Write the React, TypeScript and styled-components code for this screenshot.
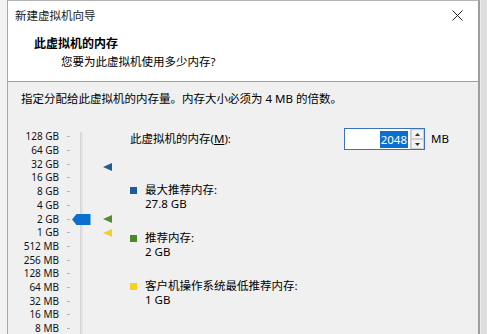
import React from "react";
import styled, { createGlobalStyle } from "styled-components";

const GlobalStyle = createGlobalStyle`
  html, body {
    margin: 0;
    padding: 0;
    background: #e6e6e6;
  }
  body {
    font-family: "Noto Sans", "Noto Sans CJK SC", sans-serif;
    font-size: 11.5px;
    color: #000;
  }
`;

const ROW = 13.71;

const scale = [
  "128 GB", "64 GB", "32 GB", "16 GB", "8 GB", "4 GB", "2 GB", "1 GB",
  "512 MB", "256 MB", "128 MB", "64 MB", "32 MB", "16 MB", "8 MB",
];

// position on the slider, counted in rows from 128 GB (log2 scale)
const rowOf = (gb: number) => 7 - Math.log2(gb);

const Page = styled.div`
  height: 334px;
  overflow: hidden;
  display: flex;
  background: #f2f2f2;
`;

const Window = styled.div`
  margin-left: 7px;
  width: 470px;
  border-left: 1px solid #a9a9a9;
  border-right: 2px solid #9d9d9d;
  border-top: 1px solid #b4b4b4;
  background: #f0f0f0;
  display: flex;
  flex-direction: column;
`;

const Outside = styled.div`
  flex: 1;
  background: #dedede;
  border-left: 1px solid #ececec;
`;

const Head = styled.div`
  background: #fff;
  border-bottom: 1px solid #a0a0a0;
  padding-bottom: 11px;
`;

const TitleBar = styled.div`
  height: 29px;
  display: flex;
  align-items: center;
  justify-content: space-between;
  padding: 0 15px 0 7px;
  line-height: 16px;
  color: #1a1a1a;
`;

const HeadTitle = styled.div`
  padding: 6px 0 0 26px;
  font-size: 12px;
  font-weight: 700;
  line-height: 16px;
`;

const HeadSub = styled.div`
  padding: 2px 0 0 53px;
  line-height: 16px;
`;

const Content = styled.div`
  padding: 9px 0 0 0;
`;

const Desc = styled.div`
  padding-left: 13px;
  line-height: 16px;
`;

const Main = styled.div`
  display: flex;
  margin-top: 20px;
`;

const Slider = styled.div`
  position: relative;
  width: 122px;
  display: flex;
  height: 210px;
`;

const Scale = styled.div`
  display: flex;
  flex-direction: column;
  padding-top: 3px;
`;

const ScaleRow = styled.div`
  height: ${ROW}px;
  display: flex;
  align-items: center;
`;

const ScaleLabel = styled.span`
  width: 51px;
  text-align: right;
  font-size: 10px;
  line-height: 13px;
  color: #111;
  white-space: nowrap;
`;

const Tick = styled.span`
  margin-left: 8px;
  width: 3px;
  height: 1px;
  background: #b5b5b5;
`;

const Track = styled.div`
  margin: 5px 0 0 10px;
  width: 2px;
  background: #e4e4e4;
  border-left: 1px solid #d4d4d4;
`;

const Thumb = styled.svg`
  position: absolute;
  left: 64px;
`;

const Marker = styled.svg`
  position: absolute;
  left: 95px;
`;

const Right = styled.div`
  display: flex;
  flex-direction: column;
  margin-top: 1px;
`;

const MemRow = styled.div`
  display: flex;
  align-items: center;
  height: 22px;
`;

const MemLabel = styled.label`
  width: 214px;
  line-height: 16px;
`;

const SpinBox = styled.div`
  width: 79px;
  height: 20px;
  border: 1px solid #3c73b6;
  background: #fff;
  display: flex;
  align-items: stretch;
`;

const SpinValue = styled.div`
  flex: 1;
  display: flex;
  align-items: center;
  justify-content: flex-end;
  padding-right: 2px;
`;

const Selected = styled.span`
  background: #0a6fd1;
  color: #fff;
  line-height: 17px;
  padding: 0 1px;
`;

const SpinButtons = styled.div`
  width: 13px;
  display: flex;
  flex-direction: column;
  border-left: 1px solid #c9c9c9;
`;

const SpinButton = styled.div`
  flex: 1;
  display: flex;
  align-items: center;
  justify-content: center;
  background: #f3f3f3;
  border: 1px solid #d0d0d0;
  box-sizing: border-box;
`;

const Unit = styled.span`
  margin-left: 6px;
  line-height: 16px;
`;

const Legend = styled.div`
  display: flex;
  flex-direction: column;
  gap: 20px;
  margin-top: 33px;
`;

const LegendItem = styled.div`
  display: flex;
  align-items: flex-start;
  line-height: 14px;
`;

const Swatch = styled.span<{ $color: string }>`
  width: 7px;
  height: 7px;
  margin-top: 4px;
  background: ${({ $color }) => $color};
  flex-shrink: 0;
`;

const LegendText = styled.div`
  margin-left: 8px;
`;

const markers = [
  { gb: 27.8, color: "#1d5e92" },
  { gb: 2, color: "#568c2c" },
  { gb: 1, color: "#f2d02c" },
];

const legend = [
  { color: "#1b5d9c", label: "最大推荐内存:", value: "27.8 GB" },
  { color: "#4a8a24", label: "推荐内存:", value: "2 GB" },
  { color: "#f7d21c", label: "客户机操作系统最低推荐内存:", value: "1 GB" },
];

const rowCenter = (r: number) => 3 + ROW / 2 + r * ROW;

export default function App() {
  return (
    <>
      <GlobalStyle />
      <Page>
        <Window>
          <Head>
            <TitleBar>
              <span>新建虚拟机向导</span>
              <svg width="11" height="11" viewBox="0 0 11 11">
                <path d="M0.5 0.5 L10.5 10.5 M10.5 0.5 L0.5 10.5" stroke="#222" strokeWidth="1" />
              </svg>
            </TitleBar>
            <HeadTitle>此虚拟机的内存</HeadTitle>
            <HeadSub>您要为此虚拟机使用多少内存?</HeadSub>
          </Head>
          <Content>
            <Desc>指定分配给此虚拟机的内存量。内存大小必须为 4 MB 的倍数。</Desc>
            <Main>
              <Slider>
                <Scale>
                  {scale.map((s) => (
                    <ScaleRow key={s}>
                      <ScaleLabel>{s}</ScaleLabel>
                      <Tick />
                    </ScaleRow>
                  ))}
                </Scale>
                <Track />
                <Thumb
                  width="19"
                  height="11"
                  viewBox="0 0 19 11"
                  style={{ top: rowCenter(rowOf(2)) - 5.5 }}
                >
                  <path d="M0 5.5 L4.5 0 H18.5 V11 H4.5 Z" fill="#0b6fd0" />
                </Thumb>
                {markers.map((m) => (
                  <Marker
                    key={m.gb}
                    width="9"
                    height="8"
                    viewBox="0 0 9 8"
                    style={{ top: rowCenter(rowOf(m.gb)) - 4 }}
                  >
                    <path d="M0 4 L9 0 V8 Z" fill={m.color} />
                  </Marker>
                ))}
              </Slider>
              <Right>
                <MemRow>
                  <MemLabel>
                    此虚拟机的内存(<u>M</u>):
                  </MemLabel>
                  <SpinBox>
                    <SpinValue>
                      <Selected>2048</Selected>
                    </SpinValue>
                    <SpinButtons>
                      <SpinButton>
                        <svg width="5" height="3" viewBox="0 0 5 3">
                          <path d="M0 3 L2.5 0 L5 3 Z" fill="#333" />
                        </svg>
                      </SpinButton>
                      <SpinButton>
                        <svg width="5" height="3" viewBox="0 0 5 3">
                          <path d="M0 0 L2.5 3 L5 0 Z" fill="#333" />
                        </svg>
                      </SpinButton>
                    </SpinButtons>
                  </SpinBox>
                  <Unit>MB</Unit>
                </MemRow>
                <Legend>
                  {legend.map((l) => (
                    <LegendItem key={l.label}>
                      <Swatch $color={l.color} />
                      <LegendText>
                        <div>{l.label}</div>
                        <div>{l.value}</div>
                      </LegendText>
                    </LegendItem>
                  ))}
                </Legend>
              </Right>
            </Main>
          </Content>
        </Window>
        <Outside />
      </Page>
    </>
  );
}
